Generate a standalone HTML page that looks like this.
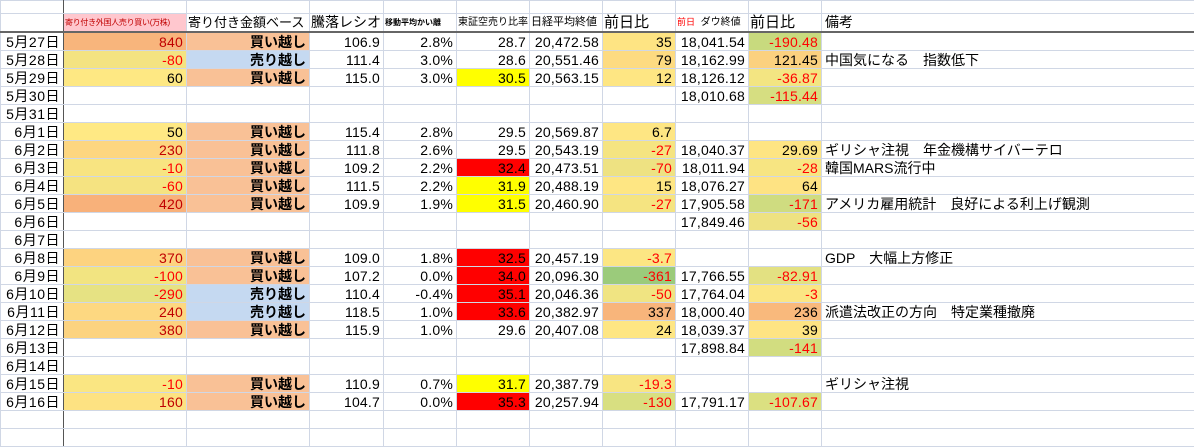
<!DOCTYPE html>
<html><head><meta charset="utf-8"><style>
body{margin:0;width:1194px;height:437px;overflow:hidden;background:#fff;font-family:"Liberation Sans","Noto Sans CJK JP",sans-serif;}
table{border-collapse:collapse;table-layout:fixed;position:absolute;left:0;top:0;width:1194px}
td{box-sizing:border-box;border:1px solid #d0d7e5;height:18px;padding:1px 3px 0 2px;font-size:14px;line-height:16px;white-space:nowrap;overflow:hidden;text-align:right;color:#000;letter-spacing:0.2px}
tr.r0 td{height:13px;padding:0;line-height:10px}
tr.hd td{border-bottom:2px solid #666;font-size:14px;text-align:left;padding:0 0 0 1px;line-height:15px;height:18px;letter-spacing:0}
td.a{border-right:1px solid #555;font-size:14px;letter-spacing:0.5px}
td.k{text-align:left;font-size:14px;padding-left:3px;letter-spacing:0}
.b{font-weight:bold;font-size:14px;letter-spacing:0}
.buy{background:#f9c196}.sell{background:#c5d9f1}
.dr{color:#c00000}.rr{color:#ff0000}
.R{background:#ff0000}.Y{background:#ffff00}
</style></head><body>
<table>
<colgroup><col style="width:63px"><col style="width:123px"><col style="width:123px"><col style="width:74px"><col style="width:73px"><col style="width:73px"><col style="width:73px"><col style="width:73px"><col style="width:73px"><col style="width:73px"><col style="width:373px"></colgroup>
<tr class="r0"><td class="a"></td><td></td><td></td><td></td><td></td><td></td><td></td><td></td><td></td><td></td><td></td></tr>
<tr class="hd"><td class="a"></td>
<td style="background:#ffc7ce;color:#c00000;font-size:8px;letter-spacing:-0.3px">寄り付き外国人売り買い(万株)</td>
<td style="font-size:13px">寄り付き金額ベース</td><td>騰落レシオ</td>
<td style="font-size:8px;font-weight:bold">移動平均かい離</td>
<td style="font-size:10px">東証空売り比率</td><td style="font-size:11px">日経平均終値</td><td style="font-size:15px">前日比</td>
<td style="font-size:10px"><span style="color:#f00;font-size:9px">前日</span>&nbsp; ダウ終値</td><td style="font-size:15px">前日比</td><td class="k" style="font-size:14px;padding-left:3px">備考</td></tr>

<tr><td class="a">5月27日</td><td class="dr" style="background:#f8b57c">840</td><td class="b buy">買い越し</td><td>106.9</td><td>2.8%</td><td>28.7</td><td>20,472.58</td><td style="background:#fee483">35</td><td>18,041.54</td><td class="rr" style="background:#c8da7e">-190.48</td><td class="k"></td></tr>
<tr><td class="a">5月28日</td><td class="rr" style="background:#f4e381">-80</td><td class="b sell">売り越し</td><td>111.4</td><td>3.0%</td><td>28.6</td><td>20,551.46</td><td style="background:#fddb81">79</td><td>18,162.99</td><td style="background:#fbd17f">121.45</td><td class="k">中国気になる　指数低下</td></tr>
<tr><td class="a">5月29日</td><td style="background:#fee883">60</td><td class="b buy">買い越し</td><td>115.0</td><td>3.0%</td><td class="Y">30.5</td><td>20,563.15</td><td style="background:#fee683">12</td><td>18,126.12</td><td class="rr" style="background:#f3e582">-36.87</td><td class="k"></td></tr>
<tr><td class="a">5月30日</td><td></td><td></td><td></td><td></td><td></td><td></td><td></td><td>18,010.68</td><td class="rr" style="background:#d6de81">-115.44</td><td class="k"></td></tr>
<tr><td class="a">5月31日</td><td></td><td></td><td></td><td></td><td></td><td></td><td></td><td></td><td></td><td class="k"></td></tr>
<tr><td class="a">6月1日</td><td style="background:#ffe984">50</td><td class="b buy">買い越し</td><td>115.4</td><td>2.8%</td><td>29.5</td><td>20,569.87</td><td style="background:#fee683">6.7</td><td></td><td></td><td class="k"></td></tr>
<tr><td class="a">6月2日</td><td class="dr" style="background:#fdd680">230</td><td class="b buy">買い越し</td><td>111.8</td><td>2.6%</td><td>29.5</td><td>20,543.19</td><td class="rr" style="background:#f5e481">-27</td><td>18,040.37</td><td style="background:#fee583">29.69</td><td class="k">ギリシャ注視　年金機構サイバーテロ</td></tr>
<tr><td class="a">6月3日</td><td class="rr" style="background:#f8e481">-10</td><td class="b buy">買い越し</td><td>109.2</td><td>2.2%</td><td class="R">32.4</td><td>20,473.51</td><td class="rr" style="background:#eee282">-70</td><td>18,011.94</td><td class="rr" style="background:#f7e582">-28</td><td class="k">韓国MARS流行中</td></tr>
<tr><td class="a">6月4日</td><td class="rr" style="background:#f5e381">-60</td><td class="b buy">買い越し</td><td>111.5</td><td>2.2%</td><td class="Y">31.9</td><td>20,488.19</td><td style="background:#fee683">15</td><td>18,076.27</td><td style="background:#fee383">64</td><td class="k"></td></tr>
<tr><td class="a">6月5日</td><td class="dr" style="background:#f8b17a">420</td><td class="b buy">買い越し</td><td>109.9</td><td>1.9%</td><td class="Y">31.5</td><td>20,460.90</td><td class="rr" style="background:#f5e481">-27</td><td>17,905.58</td><td class="rr" style="background:#cfdc80">-171</td><td class="k">アメリカ雇用統計　良好による利上げ観測</td></tr>
<tr><td class="a">6月6日</td><td></td><td></td><td></td><td></td><td></td><td></td><td></td><td>17,849.46</td><td class="rr" style="background:#eee282">-56</td><td class="k"></td></tr>
<tr><td class="a">6月7日</td><td></td><td></td><td></td><td></td><td></td><td></td><td></td><td></td><td></td><td class="k"></td></tr>
<tr><td class="a">6月8日</td><td class="dr" style="background:#fdd380">370</td><td class="b buy">買い越し</td><td>109.0</td><td>1.8%</td><td class="R">32.5</td><td>20,457.19</td><td class="rr" style="background:#fce683">-3.7</td><td></td><td></td><td class="k">GDP　大幅上方修正</td></tr>
<tr><td class="a">6月9日</td><td class="rr" style="background:#f2e481">-100</td><td class="b buy">買い越し</td><td>107.2</td><td>0.0%</td><td class="R">34.0</td><td>20,096.30</td><td class="rr" style="background:#9bcb7b">-361</td><td>17,766.55</td><td class="rr" style="background:#e3e182">-82.91</td><td class="k"></td></tr>
<tr><td class="a">6月10日</td><td class="rr" style="background:#e6e283">-290</td><td class="b sell">売り越し</td><td>110.4</td><td>-0.4%</td><td class="R">35.1</td><td>20,046.36</td><td class="rr" style="background:#f0e482">-50</td><td>17,764.04</td><td class="rr" style="background:#fbe683">-3</td><td class="k"></td></tr>
<tr><td class="a">6月11日</td><td class="dr" style="background:#fdd881">240</td><td class="b sell">売り越し</td><td>118.5</td><td>1.0%</td><td class="R">33.6</td><td>20,382.97</td><td style="background:#f8b57b">337</td><td>18,000.40</td><td style="background:#f9b97c">236</td><td class="k">派遣法改正の方向　特定業種撤廃</td></tr>
<tr><td class="a">6月12日</td><td class="dr" style="background:#fcd380">380</td><td class="b buy">買い越し</td><td>115.9</td><td>1.0%</td><td>29.6</td><td>20,407.08</td><td style="background:#fee683">24</td><td>18,039.37</td><td style="background:#fee483">39</td><td class="k"></td></tr>
<tr><td class="a">6月13日</td><td></td><td></td><td></td><td></td><td></td><td></td><td></td><td>17,898.84</td><td class="rr" style="background:#d2dd80">-141</td><td class="k"></td></tr>
<tr><td class="a">6月14日</td><td></td><td></td><td></td><td></td><td></td><td></td><td></td><td></td><td></td><td class="k"></td></tr>
<tr><td class="a">6月15日</td><td class="rr" style="background:#fae682">-10</td><td class="b buy">買い越し</td><td>110.9</td><td>0.7%</td><td class="Y">31.7</td><td>20,387.79</td><td class="rr" style="background:#f8e582">-19.3</td><td></td><td></td><td class="k">ギリシャ注視</td></tr>
<tr><td class="a">6月16日</td><td class="dr" style="background:#fde282">160</td><td class="b buy">買い越し</td><td>104.7</td><td>0.0%</td><td class="R">35.3</td><td>20,257.94</td><td class="rr" style="background:#d8df81">-130</td><td>17,791.17</td><td class="rr" style="background:#dbe081">-107.67</td><td class="k"></td></tr>
<tr><td class="a"></td><td></td><td></td><td></td><td></td><td></td><td></td><td></td><td></td><td></td><td class="k"></td></tr>
<tr><td class="a"></td><td></td><td></td><td></td><td></td><td></td><td></td><td></td><td></td><td></td><td class="k"></td></tr>
</table>
</body></html>
